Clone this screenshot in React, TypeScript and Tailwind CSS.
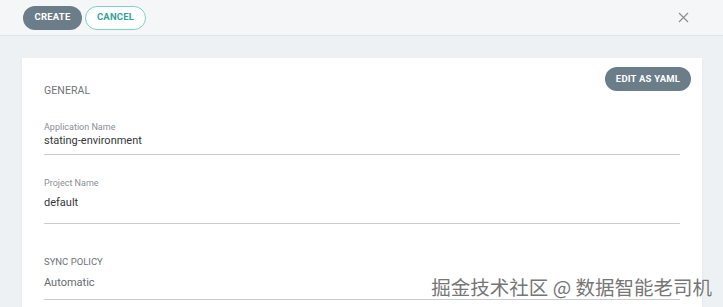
export default function App() {
  return (
    <div className="relative h-[307px] w-[723px] overflow-hidden bg-[#eef1f4] font-['Roboto',sans-serif]">
      <div className="flex h-[36px] items-center justify-between border-b border-b-[#dfe3e7] bg-[#f4f6f8] pl-[23px] pr-[34px]">
        <div className="flex gap-[3px]">
          <button className="h-[24px] w-[59px] rounded-full bg-[#6b7d89] text-[9.5px] font-bold tracking-[0.2px] text-white">
            CREATE
          </button>
          <button className="h-[24px] w-[61px] rounded-full border border-[#7fd0c6] bg-white text-[9.5px] font-bold tracking-[0.2px] text-[#2fa496]">
            CANCEL
          </button>
        </div>
        <svg width="11" height="11" viewBox="0 0 11 11" className="text-[#8a8f94]">
          <path d="M1 1 L10 10 M10 1 L1 10" stroke="currentColor" strokeWidth="1.2" />
        </svg>
      </div>

      <div className="px-[22px] pt-[22px]">
        <div className="relative h-[260px] w-[680px] bg-white px-[22px] pt-[27px] shadow-[0_1px_2px_rgba(0,0,0,0.06)]">
          <button className="absolute right-[11px] top-[9px] h-[24px] w-[86px] rounded-full bg-[#6b7d89] text-[9.5px] font-bold tracking-[0.2px] text-white">
            EDIT AS YAML
          </button>
          <div className="text-[10.5px] leading-[12px] tracking-[0.1px] text-[#6f7478]">GENERAL</div>
          <div className="mt-[24px]">
            <div className="text-[9px] leading-[12px] text-[#8a8f94]">Application Name</div>
            <div className="border-b border-b-[#c9cdd1] pb-[5px] text-[11px] leading-[16px] text-[#33373b]">stating-environment</div>
          </div>
          <div className="mt-[22px]">
            <div className="text-[9px] leading-[12px] text-[#8a8f94]">Project Name</div>
            <div className="mt-[7px] border-b border-b-[#c9cdd1] pb-[13px] text-[11px] leading-[14px] text-[#33373b]">default</div>
          </div>
          <div className="mt-[32px]">
            <div className="text-[9.5px] leading-[12px] text-[#6f7478]">SYNC POLICY</div>
            <div className="mt-[8px] border-b border-b-[#c9cdd1] pb-[9px] text-[11px] leading-[14px] text-[#666b70]">Automatic</div>
          </div>
        </div>
      </div>

      <div className="absolute bottom-[8px] right-[11px] font-['Noto_Sans_CJK_SC',sans-serif] text-[19.5px] leading-[24px] text-[#767676] [text-shadow:0_0_1px_#fff,0_0_2px_#fff,0_0_2px_#fff]">
        掘金技术社区 @ 数据智能老司机
      </div>
    </div>
  )
}
